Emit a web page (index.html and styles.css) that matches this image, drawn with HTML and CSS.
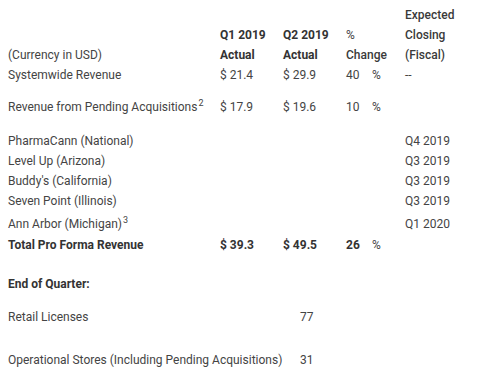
FILE: index.html
```html
<!DOCTYPE html>
<html>
<head>
<meta charset="utf-8">
<link rel="stylesheet" href="styles.css">
</head>
<body>
<div class="sheet">
  <div class="row head">
    <div class="cell">(Currency in USD)</div>
    <div class="cell b">Q1 2019<br>Actual</div>
    <div class="cell b">Q2 2019<br>Actual</div>
    <div class="cell">%<br><span class="m">Change</span></div>
    <div class="cell m">Expected<br>Closing<br>(Fiscal)</div>
  </div>
  <div class="row">
    <div class="cell">Systemwide Revenue</div>
    <div class="cell">$ 21.4</div>
    <div class="cell">$ 29.9</div>
    <div class="cell"><span class="num">40</span>%</div>
    <div class="cell">--</div>
  </div>
  <div class="row gap-a">
    <div class="cell">Revenue from Pending Acquisitions<sup>2</sup></div>
    <div class="cell">$ 17.9</div>
    <div class="cell">$ 19.6</div>
    <div class="cell"><span class="num">10</span>%</div>
    <div class="cell"></div>
  </div>
  <div class="row gap-b">
    <div class="cell">PharmaCann (National)</div>
    <div class="cell"></div><div class="cell"></div><div class="cell"></div>
    <div class="cell">Q4 2019</div>
  </div>
  <div class="row">
    <div class="cell">Level Up (Arizona)</div>
    <div class="cell"></div><div class="cell"></div><div class="cell"></div>
    <div class="cell">Q3 2019</div>
  </div>
  <div class="row">
    <div class="cell">Buddy's (California)</div>
    <div class="cell"></div><div class="cell"></div><div class="cell"></div>
    <div class="cell">Q3 2019</div>
  </div>
  <div class="row">
    <div class="cell">Seven Point (Illinois)</div>
    <div class="cell"></div><div class="cell"></div><div class="cell"></div>
    <div class="cell">Q3 2019</div>
  </div>
  <div class="row tall">
    <div class="cell">Ann Arbor (Michigan)<sup>3</sup></div>
    <div class="cell"></div><div class="cell"></div><div class="cell"></div>
    <div class="cell">Q1 2020</div>
  </div>
  <div class="row total">
    <div class="cell b">Total Pro Forma Revenue</div>
    <div class="cell b">$ 39.3</div>
    <div class="cell b">$ 49.5</div>
    <div class="cell"><span class="num b">26</span>%</div>
    <div class="cell"></div>
  </div>
  <div class="line gap-c">
    <div class="cell b">End of Quarter:</div>
  </div>
  <div class="line gap-d">
    <div class="cell">Retail Licenses</div>
    <div class="cell">77</div>
  </div>
  <div class="line gap-e">
    <div class="cell">Operational Stores (Including Pending Acquisitions)</div>
    <div class="cell">31</div>
  </div>
</div>
</body>
</html>
```

FILE: styles.css
```css
html, body {
  margin: 0;
  padding: 0;
  background: #ffffff;
}
body {
  font-family: Roboto, "Liberation Sans", sans-serif;
  font-size: 12px;
  line-height: 20px;
  color: #444444;
}
.sheet {
  padding: 5px 8px 0 8px;
}
.row {
  display: grid;
  grid-template-columns: 212px 63px 63px 59px 1fr;
  align-items: end;
}
.head .cell {
  align-self: end;
}
.cell {
  white-space: nowrap;
}
.b {
  font-weight: 700;
  color: #333333;
}
.m {
  font-weight: 500;
  color: #3a3a3a;
}
.num {
  display: inline-block;
  width: 26px;
}
sup {
  font-size: 9px;
  line-height: 0;
  vertical-align: 5px;
  margin-left: 1px;
}
.gap-a { margin-top: 12px; }
.gap-b { margin-top: 14px; }
.tall { height: 24px; }
.tall .cell { line-height: 22px; padding-top: 2px; }
.line {
  display: grid;
  grid-template-columns: 292px auto;
}
.gap-c { margin-top: 19px; }
.gap-d { margin-top: 13px; }
.gap-e { margin-top: 23px; }
```
